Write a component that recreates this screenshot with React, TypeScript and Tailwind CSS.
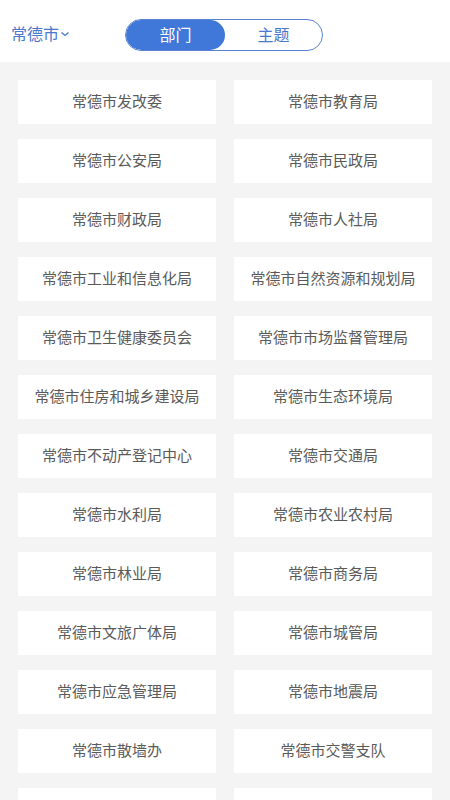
import React from "react";

const items: string[] = [
  "常德市发改委",
  "常德市教育局",
  "常德市公安局",
  "常德市民政局",
  "常德市财政局",
  "常德市人社局",
  "常德市工业和信息化局",
  "常德市自然资源和规划局",
  "常德市卫生健康委员会",
  "常德市市场监督管理局",
  "常德市住房和城乡建设局",
  "常德市生态环境局",
  "常德市不动产登记中心",
  "常德市交通局",
  "常德市水利局",
  "常德市农业农村局",
  "常德市林业局",
  "常德市商务局",
  "常德市文旅广体局",
  "常德市城管局",
  "常德市应急管理局",
  "常德市地震局",
  "常德市散墙办",
  "常德市交警支队",
  "",
  "",
];

export default function App() {
  return (
    <div
      className="w-[450px] h-[800px] overflow-hidden bg-[#f4f4f4]"
      style={{ fontFamily: '"Noto Sans CJK SC", "Noto Sans", sans-serif' }}
    >
      <div className="h-[62px] bg-white flex items-center relative">
        <div className="flex items-center pl-[11px] pt-[4px] text-[16px] leading-none text-[#4a78cf]">
          <span>常德市</span>
          <svg width="10" height="8" viewBox="0 0 10 8" className="ml-[1px] mt-[2px]">
            <path d="M1.5 2.5 L5 5.5 L8.5 2.5" fill="none" stroke="#4a78cf" strokeWidth="1.3" />
          </svg>
        </div>
        <div className="absolute left-[125px] top-[19px] w-[198px] h-[32px] rounded-full border border-[#5a82cf] flex overflow-hidden">
          <div className="w-[99px] h-full rounded-full bg-[#3f78d9] text-white text-[16px] leading-none pb-[2px] flex items-center justify-center">
            部门
          </div>
          <div className="flex-1 h-full text-[#4a78cf] text-[16px] leading-none pb-[2px] flex items-center justify-center">
            主题
          </div>
        </div>
      </div>
      <div className="grid grid-cols-2 gap-x-[18px] gap-y-[15px] px-[18px] pt-[18px]">
        {items.map((t, i) => (
          <div
            key={i}
            className="h-[44px] bg-white flex items-center justify-center text-[15px] leading-none pb-[3px] text-[#5a5a5a]"
          >
            {t}
          </div>
        ))}
      </div>
    </div>
  );
}
